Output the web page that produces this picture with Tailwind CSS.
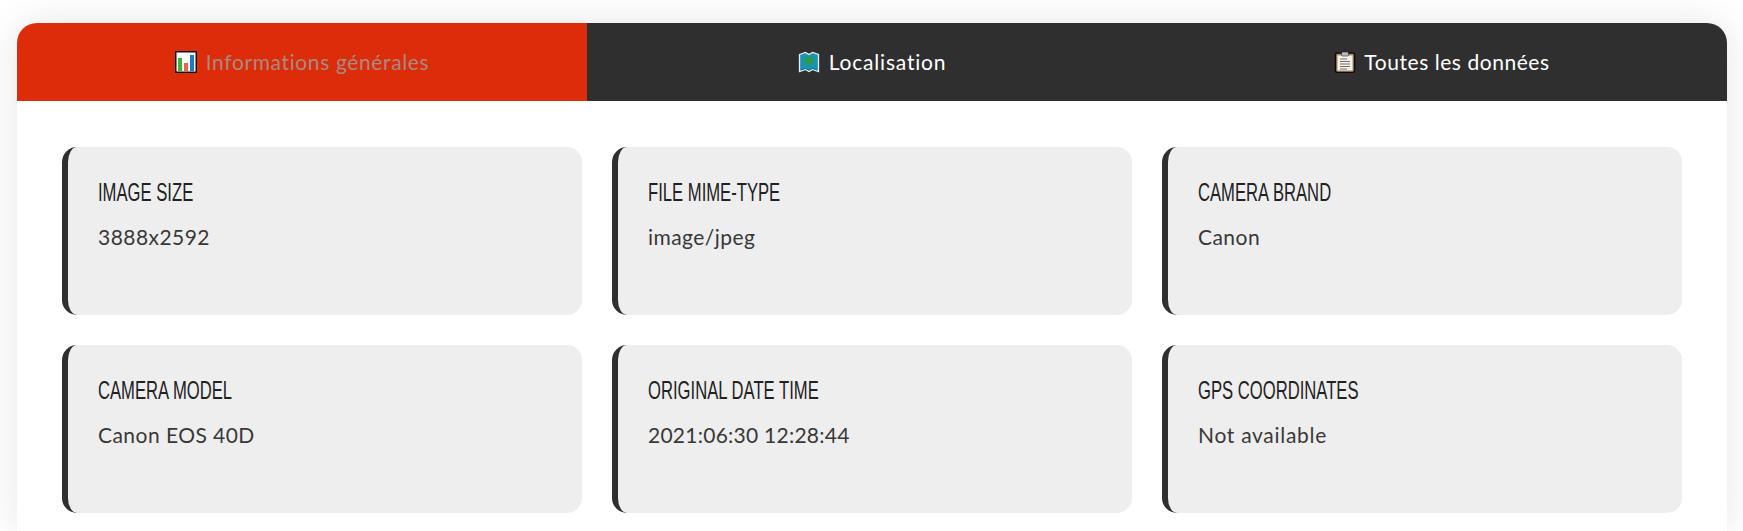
<!DOCTYPE html>
<html lang="fr">
<head>
  <meta charset="UTF-8">
  <title>Informations EXIF</title>
  <meta name="viewport" content="width=device-width, initial-scale=1">
  <script src="https://cdn.jsdelivr.net/npm/@tailwindcss/browser@4"></script>
</head>
<body class="bg-white font-['Lato','Open_Sans',sans-serif] text-[#383838] tracking-[0.45px] overflow-hidden h-[531px]">
  <div class="ml-[17px] mt-[23px] w-[1710px] bg-white rounded-t-[20px] shadow-[0_0_40px_rgba(0,0,0,0.1)] h-[508px]">
    <!-- Onglets -->
    <div class="flex h-[78px] text-[21px] tracking-[0.55px] text-white">
      <div class="w-[570px] bg-[#dd2c0a] text-[#a98a80] rounded-tl-[20px] flex items-center justify-center gap-[9px] tracking-[0.62px]">
        <svg class="w-[22px] h-[22px]" viewBox="0 0 22 22">
          <rect x="0.75" y="0.75" width="20.5" height="20.5" fill="#fff" stroke="#111" stroke-width="1.5"/>
          <rect x="3" y="7" width="4" height="13" fill="#3cb43c"/>
          <rect x="9" y="12" width="4" height="8" fill="#f0604a"/>
          <rect x="15" y="4" width="4" height="16" fill="#1f78c8"/>
        </svg>
        <span>Informations générales</span>
      </div>
      <div class="w-[570px] bg-[#2f2f2f] flex items-center justify-center gap-[9px] tracking-[0.8px]">
        <svg class="w-[22px] h-[22px]" viewBox="0 0 22 22">
          <path d="M1.5 3.5 L7.5 1.5 L11 3.5 L14.5 1.5 L20.5 3.5 V20.5 L14.5 18.5 L11 20.5 L7.5 18.5 L1.5 20.5 Z" fill="#1a93b8" stroke="#e8f0f4" stroke-width="1.3"/>
          <path d="M6 8 Q10 4 15 6 Q18 10 13 13 Q11 17 9 13 Q5 12 6 8 Z" fill="#2c9a4c"/>
          <path d="M3 19 L7.5 17.5 L11 19 L14.5 17.5 L19 19" fill="none" stroke="#0e5f7a" stroke-width="0.8"/>
        </svg>
        <span>Localisation</span>
      </div>
      <div class="w-[570px] bg-[#2f2f2f] rounded-tr-[20px] flex items-center justify-center gap-[8px]">
        <svg class="w-[22px] h-[22px]" viewBox="0 0 22 22">
          <rect x="1.5" y="2" width="19" height="19.5" rx="2" fill="#a58a68" stroke="#0f0b08" stroke-width="1.5"/>
          <rect x="3.5" y="4.5" width="15" height="15" fill="#f4f1ea"/>
          <rect x="7.5" y="1" width="7" height="4" rx="1" fill="#b8bcc0" stroke="#0f0b08" stroke-width="0.5"/>
          <path d="M6 8h7M6 10.5h10M6 13h10M6 15.5h10M6 18h7" stroke="#77716a" stroke-width="1"/>
        </svg>
        <span>Toutes les données</span>
      </div>
    </div>

    <!-- Cartes -->
    <div class="grid grid-cols-3 gap-[30px] p-[45px] pt-[46px]">
      <div class="h-[168px] bg-[#eee] border-l-[6px] border-[#2f2f2f] rounded-[15px] pl-[30px] pt-[27px]">
        <h3 class="font-['Liberation_Sans',sans-serif] text-[#222] tracking-normal text-[26px] leading-[36px] uppercase origin-left scale-x-[0.64]">Image size</h3>
        <p class="text-[21px] leading-[30px] mt-[12px]">3888x2592</p>
      </div>
      <div class="h-[168px] bg-[#eee] border-l-[6px] border-[#2f2f2f] rounded-[15px] pl-[30px] pt-[27px]">
        <h3 class="font-['Liberation_Sans',sans-serif] text-[#222] tracking-normal text-[26px] leading-[36px] uppercase origin-left scale-x-[0.64]">File mime-type</h3>
        <p class="text-[21px] leading-[30px] mt-[12px]">image/jpeg</p>
      </div>
      <div class="h-[168px] bg-[#eee] border-l-[6px] border-[#2f2f2f] rounded-[15px] pl-[30px] pt-[27px]">
        <h3 class="font-['Liberation_Sans',sans-serif] text-[#222] tracking-normal text-[26px] leading-[36px] uppercase origin-left scale-x-[0.64]">Camera brand</h3>
        <p class="text-[21px] leading-[30px] mt-[12px]">Canon</p>
      </div>
      <div class="h-[168px] bg-[#eee] border-l-[6px] border-[#2f2f2f] rounded-[15px] pl-[30px] pt-[27px]">
        <h3 class="font-['Liberation_Sans',sans-serif] text-[#222] tracking-normal text-[26px] leading-[36px] uppercase origin-left scale-x-[0.64]">Camera model</h3>
        <p class="text-[21px] leading-[30px] mt-[12px]">Canon EOS 40D</p>
      </div>
      <div class="h-[168px] bg-[#eee] border-l-[6px] border-[#2f2f2f] rounded-[15px] pl-[30px] pt-[27px]">
        <h3 class="font-['Liberation_Sans',sans-serif] text-[#222] tracking-normal text-[26px] leading-[36px] uppercase origin-left scale-x-[0.64]">Original date time</h3>
        <p class="text-[21px] leading-[30px] mt-[12px] tracking-[0.25px]">2021:06:30 12:28:44</p>
      </div>
      <div class="h-[168px] bg-[#eee] border-l-[6px] border-[#2f2f2f] rounded-[15px] pl-[30px] pt-[27px]">
        <h3 class="font-['Liberation_Sans',sans-serif] text-[#222] tracking-normal text-[26px] leading-[36px] uppercase origin-left scale-x-[0.64]">GPS coordinates</h3>
        <p class="text-[21px] leading-[30px] mt-[12px] tracking-[0.7px]">Not available</p>
      </div>
    </div>
  </div>
</body>
</html>
